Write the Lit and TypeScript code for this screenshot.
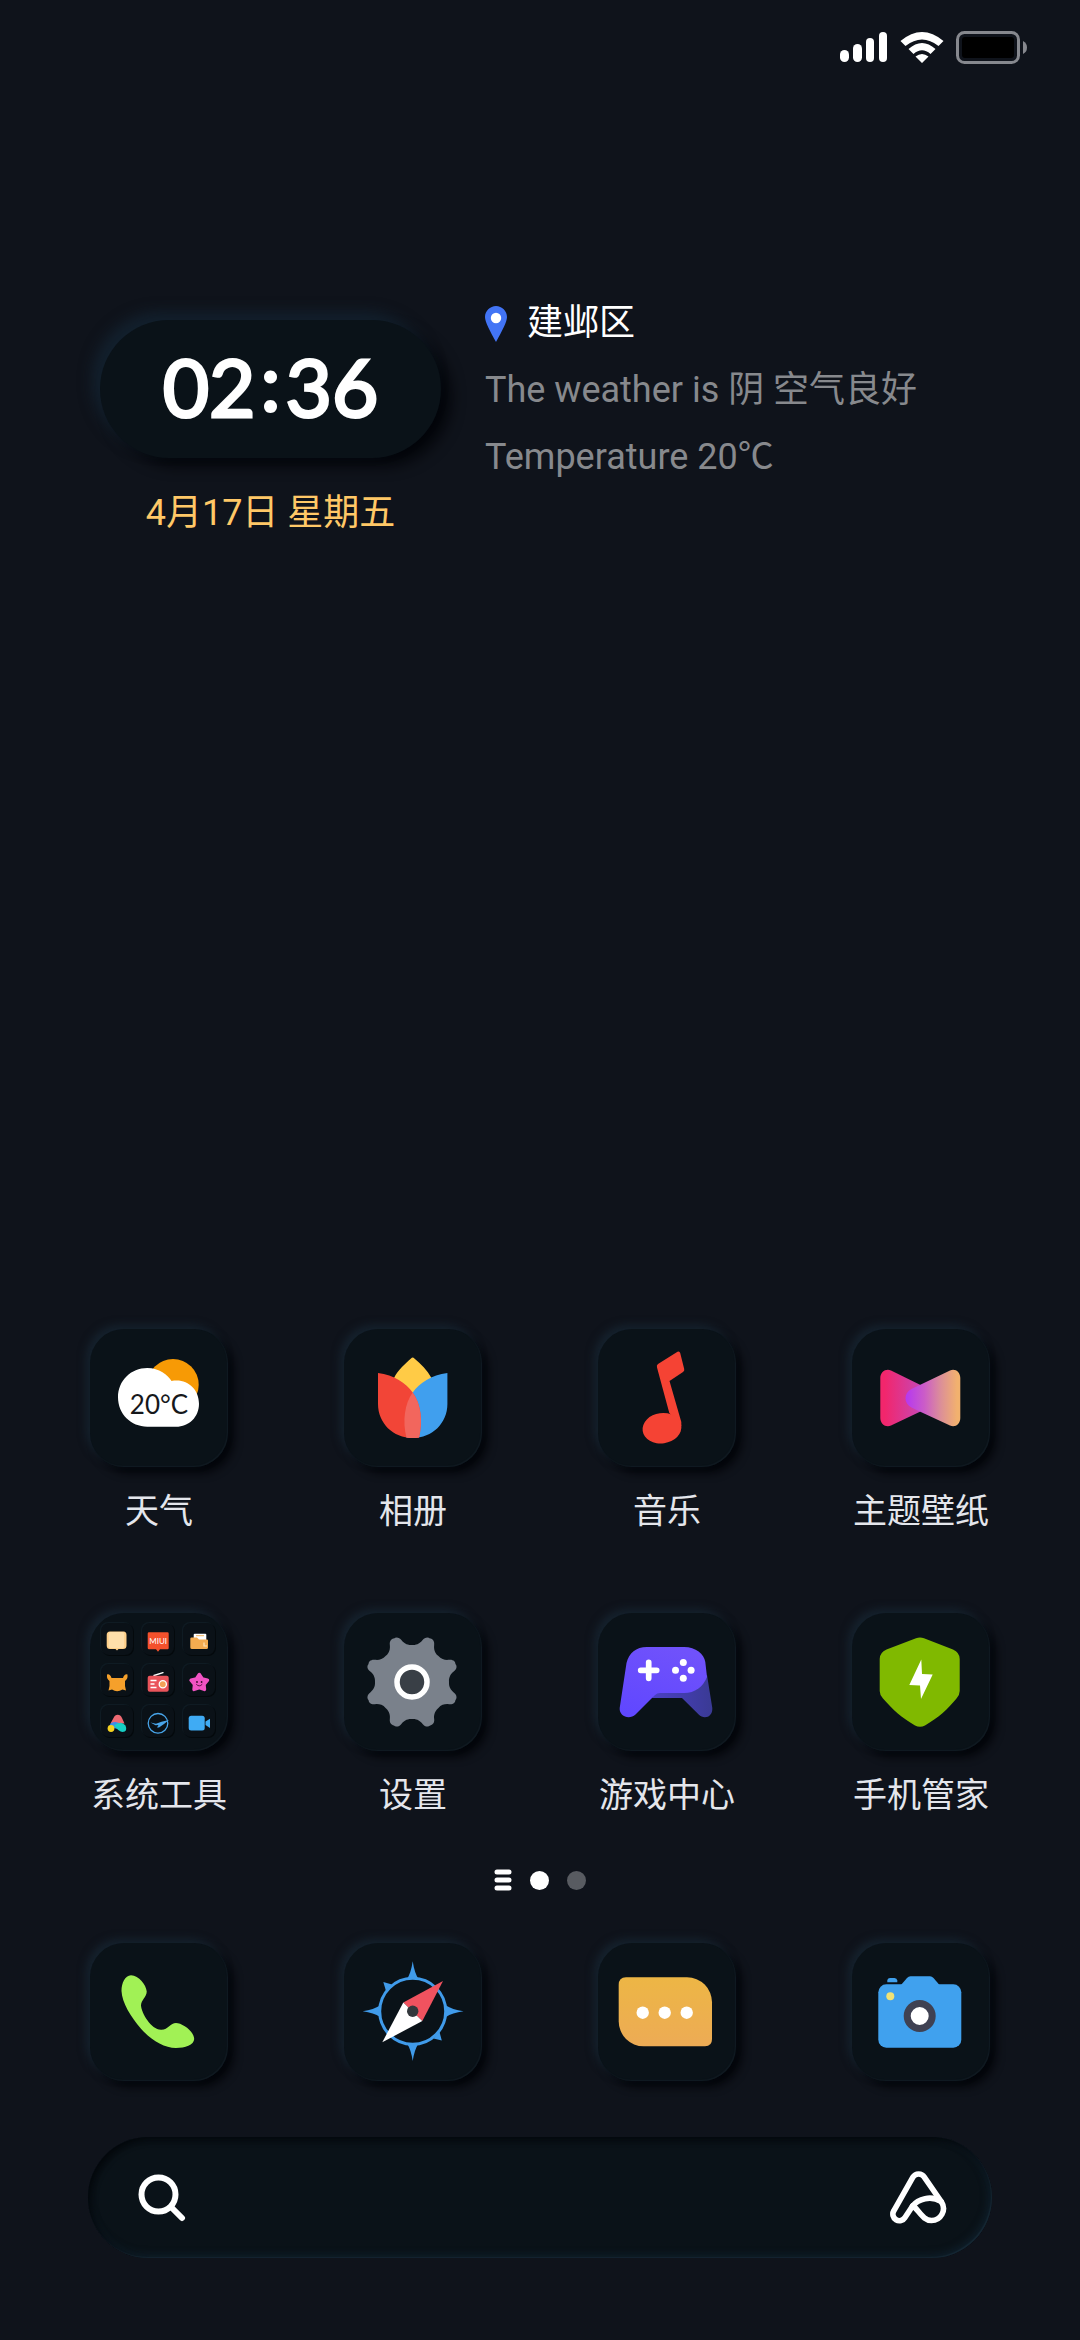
import { LitElement, html, svg, css } from 'lit';
import { customElement, property } from 'lit/decorators.js';
import { classMap } from 'lit/directives/class-map.js';

// outline of the settings cog, eight soft teeth around (68, 69)
const cogPath = () => {
  const at = (r: number, deg: number) => {
    const a = (deg * Math.PI) / 180;
    return `${(68 + r * Math.cos(a)).toFixed(2)} ${(69 + r * Math.sin(a)).toFixed(2)}`;
  };
  let d = `M${at(37, 0)}`;
  for (let i = 0; i < 8; i++) {
    const valley = i * 45;
    d += `C${at(37, valley + 8)} ${at(40, valley + 12)} ${at(43, valley + 14)}`;
    d += `C${at(47, valley + 16)} ${at(48, valley + 20)} ${at(47, valley + 22.5)}`;
    d += `C${at(48, valley + 25)} ${at(47, valley + 29)} ${at(43, valley + 31)}`;
    d += `C${at(40, valley + 33)} ${at(37, valley + 37)} ${at(37, valley + 45)}`;
  }
  return d + 'Z';
};

const icons: Record<string, unknown> = {
  weather: svg`
    <circle cx="83" cy="55.7" r="25.7" fill="#f79a05" />
    <path fill="#fff" d="M57.3 39C69 39 78 46 81.5 52C97 49 109 60 109 74.7C109 88 99 97.7 86 97.7H57.3C41 97.7 28 85 28 68.3S41 39 57.3 39Z" />
    <text class="weather-temp" x="69" y="85" text-anchor="middle">20°C</text>
  `,
  photos: svg`
    <path fill="#ffcb46" d="M67 29.5Q68.7 27.5 70.4 29.5C77 35 83 41 87.5 49L70 66H67L50 49C54 41 61 35 67 29.5Z" />
    <path fill="#409fee" d="M103.4 44C87.4 46 75.4 54 68.7 63.5C60.4 75 58.4 92 62.4 108.5Q65.4 109 68.7 109C88.4 109 103.4 94 103.4 75Z" />
    <path fill="#f24537" d="M34 44C50 46 62 54 68.7 63.5C77 75 79 92 75 108.5Q72 109 68.7 109C49 109 34 94 34 75Z" />
    <path fill="#f2665d" d="M68.7 63.5C77 75 79 92 75 108.5Q68.7 109.5 62.4 108.5C58.4 92 60.4 75 68.7 63.5Z" />
  `,
  music: svg`
    <g fill="#f54334">
      <path d="M60 35Q58.3 36 59 38.5L71.3 84L83.3 97V93L71.5 52L85 43Q86.7 42 86.2 40L82.2 24Q81.5 21.8 79.5 22.8Z" />
      <ellipse cx="64" cy="99.2" rx="19.5" ry="15.2" transform="rotate(-8 64 99.2)" />
    </g>
  `,
  themes: svg`
    <defs>
      <linearGradient id="bow-left" gradientUnits="userSpaceOnUse" x1="28" x2="75" y1="0" y2="0">
        <stop offset="0.1" stop-color="#f2266c" />
        <stop offset="1" stop-color="#c04cc0" />
      </linearGradient>
      <linearGradient id="bow-right" gradientUnits="userSpaceOnUse" x1="53" x2="108" y1="0" y2="0">
        <stop offset="0" stop-color="#b536f2" />
        <stop offset="0.35" stop-color="#cb5cc8" />
        <stop offset="0.65" stop-color="#dc8f98" />
        <stop offset="0.95" stop-color="#f2b16e" />
      </linearGradient>
    </defs>
    <path fill="url(#bow-left)" d="M28.3 49C28.3 43 34 39 39 41.5L68.5 56V82.5L39 96.5C34 99 28.3 95 28.3 89Z" />
    <path fill="url(#bow-right)" d="M68.3 55.7L98 41.5C103 39 108.3 43 108.3 49V89C108.3 95 103 99 98 96.5L68.3 82.7L59.5 78.5C51.5 74.5 51.5 64 59.5 60Z" />
  `,
  settings: svg`
    <path fill="#7a818b" d=${cogPath()} />
    <circle cx="68" cy="69" r="15" fill="#393f46" stroke="#fff" stroke-width="5.5" />
  `,
  games: svg`
    <defs>
      <linearGradient id="pad-body" x1="0.6" y1="0" x2="0.2" y2="1">
        <stop offset="0" stop-color="#7052fb" />
        <stop offset="1" stop-color="#6047ff" />
      </linearGradient>
      <linearGradient id="pad-leg" x1="0" y1="0" x2="1" y2="0">
        <stop offset="0" stop-color="#4b40c4" />
        <stop offset="1" stop-color="#3a3a94" />
      </linearGradient>
    </defs>
    <path fill="url(#pad-leg)" d="M58 76L109 62L114.3 95C115 104 106 107 100.7 101.5L84 85H54Z" />
    <path fill="url(#pad-body)" d="M49 34H86C98 34 106 41 107.3 49L109 64C105 74 97 80 86 80H62Q59 80 57 82L37.5 101.5C31 107.5 21 103 21.7 95L28.5 50C31 40 38 34 49 34Z" />
    <path stroke="#fff" stroke-width="5.7" stroke-linecap="round" d="M42.7 57.3H58.7M50.7 49.3V65.3" />
    <g fill="#fff">
      <circle cx="85.3" cy="49.5" r="3.5" />
      <circle cx="85.3" cy="65.2" r="3.5" />
      <circle cx="77.5" cy="57.3" r="3.5" />
      <circle cx="93.1" cy="57.3" r="3.5" />
    </g>
  `,
  security: svg`
    <path fill="#80b900" d="M64 25.3Q68 23.5 72 25.3L101 36.5Q107.7 39.5 107.7 46V78Q107.7 82 104.5 85.5C96 96 86 105 73 112.5Q68 115 63 112.5C50 105 40 96 31 85.5Q27.7 82 27.7 78V46Q27.7 39.5 34.5 36.5Z" />
    <path fill="#fff" d="M69.3 46.5L57.3 72L68 72.5L69 86L80.7 61.5L70 61Z" />
  `,
  phone: svg`
    <path fill="#a1f155" d="M41 32.3C49 32.5 56 42 56.7 48.3C57 53.5 51 57 51 62.5C51.5 70 61 86.5 71 86.7C78 87 80.5 80 86 80C92 80 104 88 104.2 96C104 102 95 105 86 105C74 105 61 97 51 85.7C41 74 32 60 31.5 48C31.5 40 35 32.5 41 32.3Z" />
  `,
  browser: svg`
    <g fill="#409bea">
      <path d="M68.7 18.3Q70.5 30 74.5 36H63Q67 30 68.7 18.3Z" />
      <path d="M68.7 118Q67 106.5 63 100.5H74.5Q70.5 106.5 68.7 118Z" />
      <path d="M18.7 68.3Q30 66.5 36 62.5V74Q30 70 18.7 68.3Z" />
      <path d="M119.5 68.3Q108 70 102 74V62.5Q108 66.5 119.5 68.3Z" />
      <path d="M39.3 39L48 41.5L42 48Z" />
      <path d="M97.8 97.5L89.5 95.5L95.5 89Z" />
    </g>
    <circle cx="68.7" cy="68.3" r="33" fill="none" stroke="#409bea" stroke-width="3" />
    <path fill="#f0525f" d="M99 38L59.3 59.5L78.3 78Z" />
    <path fill="#fff" d="M38.3 99.3L59.3 59.5L78.3 78Z" />
    <circle cx="68.7" cy="68.3" r="5.7" fill="#33383c" />
  `,
  messages: svg`
    <defs>
      <linearGradient id="bubble" x1="0" y1="0" x2="0" y2="1">
        <stop offset="0" stop-color="#edb645" />
        <stop offset="1" stop-color="#edab55" />
      </linearGradient>
    </defs>
    <path fill="url(#bubble)" d="M28 34.3H89A25 25 0 0 1 114 59.3V96Q114 103.3 107 103.3H45.7A25 25 0 0 1 20.7 78.3V42Q20.7 34.3 28 34.3Z" />
    <g fill="#fff">
      <circle cx="44.7" cy="69.7" r="6.2" />
      <circle cx="66.7" cy="69.7" r="6.2" />
      <circle cx="88.7" cy="69.7" r="6.2" />
    </g>
  `,
  camera: svg`
    <g fill="#40a1ee">
      <rect x="26.3" y="41.3" width="83" height="63.4" rx="8" />
      <path d="M49 42L55 35Q56.5 33.3 58.5 33.3H78Q80 33.3 81.5 35L87.5 42Z" />
      <path d="M35.3 39.3V37Q36 35 38 35H42.5Q45 35 45.3 37.5V39.3Z" />
    </g>
    <circle cx="38.3" cy="53.3" r="4" fill="#f0e275" />
    <circle cx="67.7" cy="73" r="12.5" fill="#fff" stroke="#3f4152" stroke-width="7" />
  `,
  tools: svg`
    ${[10, 51, 92].map((y) => [11, 52, 93].map((x) => svg`
      <rect x=${x - 1} y=${y - 1} width="32" height="32" rx="8" fill="#0f1b23" />
      <rect x=${x + 1} y=${y + 1} width="32" height="32" rx="8" fill="#04090c" />
      <rect x=${x} y=${y} width="32" height="32" rx="8" fill="#0a1117" />
    `))}
    <path fill="#ffd08a" d="M20 18.5H33.5Q36.5 18.5 36.5 22V32.5Q36.5 36 33 36H28.5L27 37.5L25.5 36H20Q16.7 36 16.7 32.5V22Q16.7 18.5 20 18.5Z" />
    <rect x="18.7" y="19" width="15.5" height="16" rx="2" fill="#ffdfaa" />
    <path fill="#f4512c" d="M59 19.3H77.5Q78.7 19.3 78.7 20.5V35Q78.7 36.3 77.5 36.3H70L68 38.7L66 36.3H59Q57.7 36.3 57.7 35V20.5Q57.7 19.3 59 19.3Z" />
    <text class="mini-text" x="68.2" y="30.7" text-anchor="middle">MIUI</text>
    <rect x="103.7" y="20.7" width="12.6" height="8" rx="1" fill="#fff" />
    <path stroke="#f5b35a" stroke-width="1" d="M106 22.7H114" />
    <path fill="#f5ac50" d="M101.5 24.5H107L109 26.5H117Q118 26.5 118 27.5V34.5Q118 36 116.5 36H102Q100.3 36 100.3 34.5V25.7Q100.3 24.5 101.5 24.5Z" />
    <path fill="none" stroke="#ffe3b8" stroke-width="1.2" d="M114 29.5V33H117" />
    <path fill="#f5a02b" d="M17 61.5Q20 60.5 21.5 65H33Q34.5 60.5 37.5 61.5Q38 66 35 68V73L36 77.5L32.5 76.5Q27 80 22 76.5L18.5 77.5L19.5 73V68Q16.5 66 17 61.5Z" />
    <path stroke="#fff" stroke-width="1.4" stroke-linecap="round" d="M64 62.5L73 59.7" />
    <rect x="57.7" y="62.7" width="21" height="16" rx="2" fill="#ea545b" />
    <path stroke="#fff" stroke-width="1.3" d="M60.5 67.5H66.5M60.5 71H64.5M60.5 74.5H66.5" />
    <circle cx="72.8" cy="71.3" r="3.6" fill="#f2a157" stroke="#fff" stroke-width="1.3" />
    <path fill="#f153c4" stroke="#f153c4" stroke-width="3.4" stroke-linejoin="round" d="M109.3 61.5L112.3 66L117.5 67.2L114 71.3L114.5 76.5L109.3 74.7L104 76.5L104.5 71.3L101 67.2L106.3 66Z" />
    <path fill="none" stroke="#5c1646" stroke-width="1" stroke-linecap="round" d="M106.5 71.5Q109.3 74.5 112 71.5" />
    <circle cx="107" cy="69" r="0.9" fill="#3b0c2c" />
    <circle cx="111.6" cy="69" r="0.9" fill="#3b0c2c" />
    <path fill="#ee6a73" d="M27.7 101.7Q30.5 101.7 32 105L34.5 110.5H20.5L23.5 105Q25 101.7 27.7 101.7Z" />
    <path fill="#3d8ee8" d="M20.5 110.5Q27 107 31 112L28 116L19 114Z" />
    <circle cx="21" cy="115.5" r="3.4" fill="#f6d21f" />
    <path fill="#17cfc4" d="M24 112.5Q31 107 35.5 112.5Q38 118.5 32.5 119Q29 119 24 112.5Z" />
    <circle cx="68" cy="110.3" r="9.8" fill="none" stroke="#48a5ea" stroke-width="1.3" />
    <path fill="#48a5ea" d="M60.5 109.5L66 110.7L71.5 108.7L79 107L74 111L69 114.5L67 114.5L68.5 112L65.5 112.3Z" />
    <rect x="98.7" y="102.7" width="16" height="14.8" rx="2.5" fill="#3fabf4" />
    <path fill="#3fabf4" d="M115.5 108.5L120 105.7V115L115.5 112Z" />
  `,
};

@customElement('app-tile')
export class AppTile extends LitElement {
  @property() icon = '';
  @property() label = '';
  @property({ type: Boolean }) bare = false;

  render() {
    return html`
      <button class="app" aria-label=${this.label}>
        <span class="tile">
          <svg viewBox="0 0 138 138" aria-hidden="true">${icons[this.icon]}</svg>
        </span>
        ${this.bare ? '' : html`<span class="label">${this.label}</span>`}
      </button>
    `;
  }

  static styles = css`
    :host {
      display: flex;
      justify-content: center;
    }
    .app {
      display: flex;
      flex-direction: column;
      align-items: center;
      gap: 22px;
      padding: 0;
      border: 0;
      background: none;
      color: #e4e6ec;
      font: inherit;
      cursor: pointer;
    }
    .tile {
      width: 138px;
      height: 138px;
      border-radius: 34px;
      background: #0a1218;
      box-shadow:
        -4px -4px 8px rgba(27, 48, 62, 0.55),
        6px 6px 8px rgba(1, 3, 6, 0.8),
        inset -1px -1px 1px rgba(28, 40, 50, 0.4);
    }
    .tile svg {
      display: block;
      width: 100%;
      height: 100%;
    }
    .label {
      font-size: 34px;
      line-height: 44px;
      white-space: nowrap;
    }
    .weather-temp {
      font: 26px Lato, sans-serif;
      fill: #16181b;
    }
    .mini-text {
      font: 8px Lato, sans-serif;
      fill: #fff;
    }
  `;
}

@customElement('app-root')
export class AppRoot extends LitElement {
  static properties = {
    page: { state: true },
  };

  declare page: number;

  apps = [
    { icon: 'weather', label: '天气' },
    { icon: 'photos', label: '相册' },
    { icon: 'music', label: '音乐' },
    { icon: 'themes', label: '主题壁纸' },
    { icon: 'tools', label: '系统工具' },
    { icon: 'settings', label: '设置' },
    { icon: 'games', label: '游戏中心' },
    { icon: 'security', label: '手机管家' },
  ];

  dock = [
    { icon: 'phone', label: '电话' },
    { icon: 'browser', label: '浏览器' },
    { icon: 'messages', label: '短信' },
    { icon: 'camera', label: '相机' },
  ];

  constructor() {
    super();
    this.page = 0;
  }

  renderStatusBar() {
    return html`
      <header class="status">
        <svg width="48" height="34" viewBox="0 0 48 34" aria-hidden="true">
          <g fill="#fff">
            <rect x="0" y="19" width="9" height="12" rx="4.5" />
            <rect x="13" y="13" width="9" height="18" rx="4.5" />
            <rect x="26" y="7" width="8" height="24" rx="4" />
            <rect x="39" y="1" width="8" height="30" rx="4" />
          </g>
        </svg>
        <svg width="44" height="34" viewBox="0 0 44 34" aria-hidden="true">
          <path fill="#fff" d="M0.5 10Q22 -8 43.5 10L38.5 15Q22 2 5.5 15ZM8.5 18Q22 6 35.5 18L30.5 23Q22 15.5 13.5 23ZM15.5 25.5Q22 20.5 28.5 25.5L22 32Z" />
        </svg>
        <svg width="72" height="34" viewBox="0 0 72 34" aria-hidden="true">
          <rect x="1.5" y="1.5" width="61" height="30" rx="7" fill="none" stroke="#86888e" stroke-width="3" />
          <rect x="6" y="6" width="52" height="21" rx="3" fill="#000" />
          <path fill="#86888e" d="M67 10Q71 12 71 16.5T67 23Z" />
        </svg>
      </header>
    `;
  }

  renderWidgets() {
    return html`
      <section class="widgets">
        <div class="clock">
          <time class="clock__time">
            <span>02</span><span class="clock__colon">:</span><span>36</span>
          </time>
          <div class="clock__date">4月17日 星期五</div>
        </div>
        <div class="weather">
          <div class="weather__place">
            <svg width="22" height="36" viewBox="0 0 22 36" aria-hidden="true">
              <path fill="#4274f5" d="M11 0C17 0 22 5 22 11C22 16 17 25 11 36C5 25 0 16 0 11C0 5 5 0 11 0Z" />
              <circle cx="11" cy="12" r="5.2" fill="#fff" />
            </svg>
            <span>建邺区</span>
          </div>
          <div>The weather is 阴 空气良好</div>
          <div>Temperature 20℃</div>
        </div>
      </section>
    `;
  }

  renderPager() {
    return html`
      <nav class="pager">
        <button class="pager__feed" aria-label="信息流">
          <svg width="18" height="22" viewBox="0 0 18 22" aria-hidden="true">
            <path stroke="#fff" stroke-width="5" stroke-linecap="round" d="M3 3H15M3 11H15M3 19H15" />
          </svg>
        </button>
        ${[0, 1].map((i) => html`
          <button
            class=${classMap({ pager__dot: true, 'pager__dot--active': this.page === i })}
            aria-label="第${i + 1}页"
            @click=${() => this.showPage(i)}></button>
        `)}
      </nav>
    `;
  }

  render() {
    return html`
      ${this.renderStatusBar()}
      ${this.renderWidgets()}
      <main class="apps">
        ${this.apps.map((a) => html`<app-tile icon=${a.icon} label=${a.label}></app-tile>`)}
      </main>
      ${this.renderPager()}
      <div class="dock">
        ${this.dock.map((a) => html`<app-tile bare icon=${a.icon} label=${a.label}></app-tile>`)}
      </div>
      <form class="search" @submit=${(e: Event) => e.preventDefault()}>
        <label class="search__icon" for="query">
          <svg width="48" height="48" viewBox="0 0 48 48" role="img" aria-label="搜索">
            <g fill="none" stroke="#fff" stroke-width="6" stroke-linecap="round">
              <circle cx="20.5" cy="20.5" r="17" />
              <path d="M33 33L44 44" />
            </g>
          </svg>
        </label>
        <input class="search__input" id="query" type="text" />
        <button class="search__assistant" type="button" aria-label="小爱同学">
          <svg width="57" height="54" viewBox="0 0 57 54" aria-hidden="true">
            <g fill="none" stroke="#fff" stroke-width="5.6" stroke-linecap="round" stroke-linejoin="round">
              <path d="M22.6 35C28 28 41 24 51 30.5" />
              <path d="M22.6 35L15 46.5A6.5 6.5 0 0 1 3.8 39.8L22.9 6.2A6.6 6.6 0 0 1 34.3 6.2L51.5 31A12 12 0 0 1 41.5 49.5C34 49.5 31 43 24.5 36" />
            </g>
          </svg>
        </button>
      </form>
    `;
  }

  showPage(i: number) {
    this.page = i;
  }

  static styles = css`
    :host {
      box-sizing: border-box;
      display: flex;
      flex-direction: column;
      min-height: 100vh;
      padding-bottom: 82px;
      background: #0f131b;
      color: #fff;
      font-family: Roboto, 'Noto Sans CJK SC', sans-serif;
    }
    button {
      cursor: pointer;
    }
    .status {
      display: flex;
      justify-content: flex-end;
      align-items: center;
      gap: 12px;
      height: 96px;
      padding-right: 52px;
    }
    .widgets {
      display: flex;
      gap: 44px;
      padding: 194px 100px 0;
      font-size: 36px;
    }
    .clock {
      display: flex;
      flex-direction: column;
      align-items: center;
      gap: 33px;
      padding-top: 30px;
    }
    .clock__time {
      box-sizing: border-box;
      display: flex;
      justify-content: center;
      align-items: center;
      gap: 5px;
      width: 341px;
      height: 138px;
      padding-bottom: 6px;
      border-radius: 69px;
      background: #0a1218;
      box-shadow:
        -8px -8px 14px rgba(22, 42, 58, 0.6),
        10px 8px 14px rgba(1, 3, 6, 0.8);
      font: 400 80px/96px Lato, sans-serif;
      -webkit-text-stroke: 3px #fff;
    }
    .clock__colon {
      padding-bottom: 12px;
    }
    .clock__date {
      color: #ffc867;
      line-height: 44px;
    }
    .weather {
      color: #87898d;
      line-height: 67px;
    }
    .weather__place {
      display: flex;
      align-items: center;
      gap: 20px;
      color: #fff;
    }
    .apps,
    .dock {
      display: grid;
      grid-template-columns: repeat(4, 1fr);
      row-gap: 80px;
      padding: 0 32px;
    }
    .apps {
      margin-top: auto;
    }
    .pager {
      display: flex;
      justify-content: center;
      align-items: center;
      gap: 18px;
      padding: 52px 0;
    }
    .pager button {
      padding: 0;
      border: 0;
    }
    .pager__feed {
      display: flex;
      background: none;
    }
    .pager .pager__dot {
      width: 19px;
      height: 19px;
      border-radius: 50%;
      background: #585b61;
    }
    .pager .pager__dot--active {
      background: #fff;
    }
    .search {
      display: flex;
      align-items: center;
      gap: 24px;
      height: 121px;
      margin: 56px 88px 0;
      padding: 0 45px 0 50px;
      box-sizing: border-box;
      border-radius: 61px;
      background: #0a1218;
      box-shadow:
        inset 3px 3px 6px rgba(0, 2, 5, 0.8),
        inset -2px -2px 8px rgba(24, 48, 66, 0.6),
        inset -1px -1px 1px rgba(40, 62, 76, 0.5);
    }
    .search__icon {
      display: flex;
    }
    .search__input {
      flex: 1;
      min-width: 0;
      border: 0;
      outline: 0;
      background: none;
      color: inherit;
      font: inherit;
      font-size: 36px;
    }
    .search__assistant {
      display: flex;
      padding: 0;
      border: 0;
      background: none;
    }
  `;
}
